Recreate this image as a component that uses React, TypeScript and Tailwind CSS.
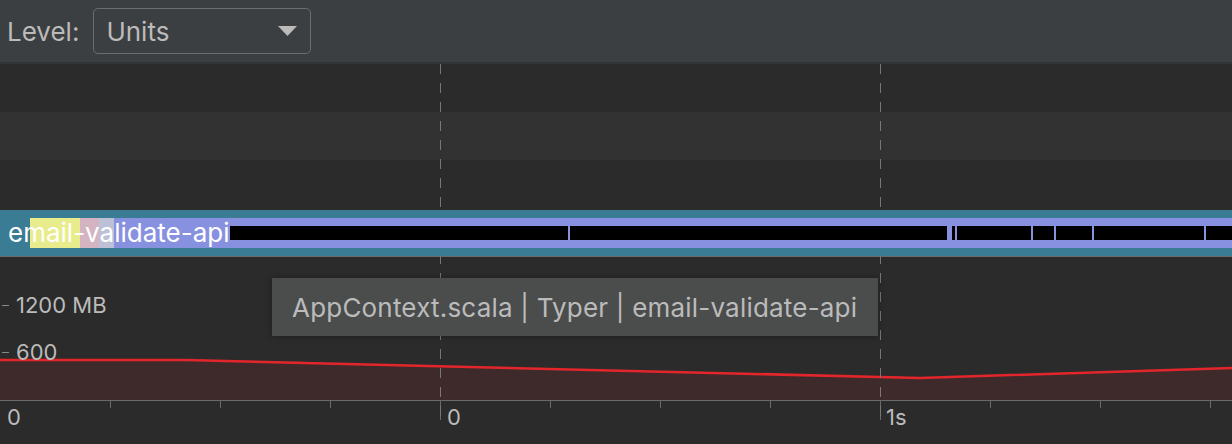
import React from 'react';

const font = { fontFamily: 'Inter, "Noto Sans", sans-serif' };

const ticks = [110, 220, 330, 550, 660, 770, 990, 1100, 1210];
const marks = [568, 955, 1031, 1054, 1092, 1204];

function Toolbar() {
  return (
    <div className="flex h-[64px] items-center gap-[14px] border-b-2 border-[#323436] bg-[#3c3f41] pl-[7px]">
      <span className="text-[26px] text-[#bbbbbb]">Level:</span>
      <div className="flex h-[46px] w-[218px] items-center justify-between rounded-[5px] border border-[#6a6c6e] pl-[12px] pr-[13px]">
        <span className="text-[26px] text-[#bbbbbb]">Units</span>
        <svg width="19" height="10" viewBox="0 0 19 10">
          <path d="M0 0 L19 0 L9.5 10 Z" fill="#bbbbbb" />
        </svg>
      </div>
    </div>
  );
}

function Track() {
  return (
    <div className="relative z-10 mt-[2px] flex h-[46px] items-center bg-[#3a7c94] pl-[30px]">
      <div className="flex h-[30px] w-full">
        <div className="w-[50px] bg-[#e8ec8c]" />
        <div className="w-[19px] bg-[#d3b4c0]" />
        <div className="w-[15px] bg-[#bdc1d8]" />
        <div className="relative flex flex-1 items-center bg-[#8891e0] pl-[116px]">
          <div className="h-[14px] flex-1 bg-black" />
          {marks.map((x) => (
            <div
              key={x}
              className="absolute top-[8px] h-[14px] w-[2px] bg-[#8891e0]"
              style={{ left: x - 114 }}
            />
          ))}
          <div className="absolute left-[833px] top-[8px] h-[14px] w-[5px] bg-[#8891e0]" />
        </div>
      </div>
      <span className="absolute left-[8px] top-[8px] text-[26px] leading-[30px] text-white">
        email-validate-api
      </span>
    </div>
  );
}

function MemoryChart() {
  return (
    <div className="relative h-[187px] border-t border-[#6a6a6a]">
      <svg className="absolute left-0 top-0" width="1232" height="187" viewBox="0 257 1232 187">
        <path d="M0 360 L186 360 L920 378 L1232 368 L1232 400 L0 400 Z" fill="#3e2a2b" />
        <path d="M0 360 L186 360 L920 378 L1232 368" fill="none" stroke="#e3262b" strokeWidth="2.5" />
        <line x1="0" y1="400.5" x2="1232" y2="400.5" stroke="#6a6a6a" />
        {ticks.map((x) => (
          <line key={x} x1={x + 0.5} y1="400" x2={x + 0.5} y2="408" stroke="#6a6a6a" />
        ))}
        <line x1="440.5" y1="400" x2="440.5" y2="420" stroke="#6a6a6a" />
        <line x1="880.5" y1="400" x2="880.5" y2="420" stroke="#6a6a6a" />
        <line x1="2" y1="305.5" x2="9" y2="305.5" stroke="#888" />
        <line x1="2" y1="352.5" x2="9" y2="352.5" stroke="#888" />
      </svg>
      <span className="absolute left-[16px] top-[32px] text-[22px] text-[#bbbbbb]">1200 MB</span>
      <span className="absolute left-[16px] top-[79px] text-[22px] text-[#bbbbbb]">600</span>
      <span className="absolute left-[7px] top-[144px] text-[22px] text-[#bbbbbb]">0</span>
      <span className="absolute left-[447px] top-[144px] text-[22px] text-[#bbbbbb]">0</span>
      <span className="absolute left-[886px] top-[144px] text-[22px] text-[#bbbbbb]">1s</span>
    </div>
  );
}

export default function App() {
  return (
    <div className="h-[444px] w-[1232px] overflow-hidden bg-[#2b2b2b]" style={font}>
      <Toolbar />
      <div className="relative">
        <div className="h-[48px] bg-[#2b2b2b]" />
        <div className="h-[48px] bg-[#323232]" />
        <div className="h-[48px] bg-[#2b2b2b]" />
        <svg className="pointer-events-none absolute left-0 top-0 z-[5]" width="1232" height="380">
          <line x1="440.5" y1="0" x2="440.5" y2="356" stroke="#777" strokeDasharray="10 9" />
          <line x1="880.5" y1="0" x2="880.5" y2="356" stroke="#777" strokeDasharray="10 9" />
        </svg>
        <Track />
        <MemoryChart />
        <div className="absolute left-[272px] top-[214px] z-20 flex h-[58px] w-[606px] items-center bg-[#4b4d4d] pl-[20px] shadow-[0_0_6px_rgba(0,0,0,0.35)]">
          <span className="text-[26px] tracking-[0.2px] text-[#bbbbbb]">
            AppContext.scala | Typer | email-validate-api
          </span>
        </div>
      </div>
    </div>
  );
}
